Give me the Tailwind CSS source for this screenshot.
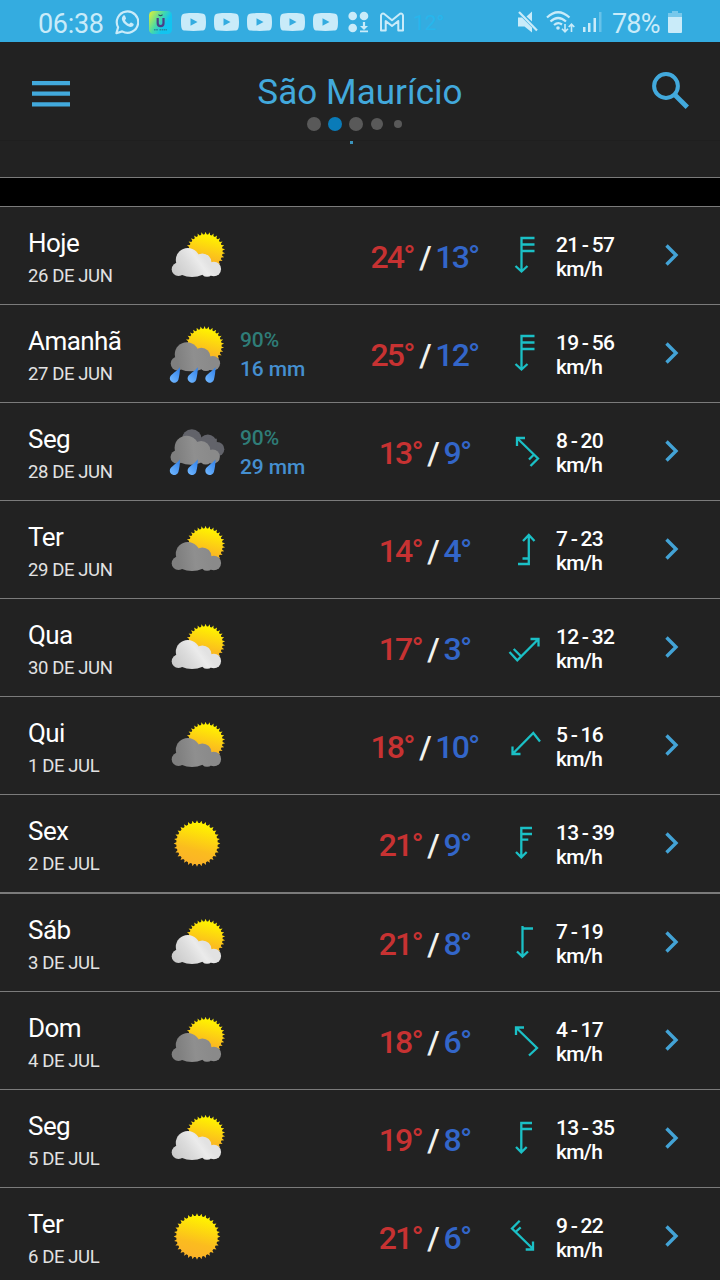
<!DOCTYPE html>
<html lang="pt-BR">
  <head>
    <meta charset="UTF-8" />
    <meta name="viewport" content="width=device-width, initial-scale=1.0" />
    <title>São Maurício</title>
    <script src="https://cdn.jsdelivr.net/npm/@tailwindcss/browser@4"></script>
  </head>
  <body class="bg-black font-['Roboto',sans-serif] text-white">
    <!-- Shared icons -->
    <svg class="absolute size-0" aria-hidden="true">
      <defs>
        <linearGradient id="sunFill" x1="0.65" y1="0" x2="0.4" y2="1">
          <stop offset="0.1" stop-color="#fff200" />
          <stop offset="0.65" stop-color="#fbbc1f" />
          <stop offset="1" stop-color="#fbb02a" />
        </linearGradient>
        <linearGradient id="lightCloud" gradientUnits="userSpaceOnUse" x1="6" y1="50" x2="34" y2="30">
          <stop offset="0" stop-color="#c9c9c9" />
          <stop offset="0.5" stop-color="#dcdcdc" />
          <stop offset="0.8" stop-color="#ebebeb" />
          <stop offset="1" stop-color="#e2e2e2" />
        </linearGradient>
        <linearGradient id="darkCloud" gradientUnits="userSpaceOnUse" x1="10" y1="42" x2="44" y2="38">
          <stop offset="0" stop-color="#7f7f7f" />
          <stop offset="0.5" stop-color="#8f8f8f" />
          <stop offset="1" stop-color="#8a8a8a" />
        </linearGradient>
        <linearGradient id="dropFill" x1="1" y1="0" x2="0.2" y2="1">
          <stop offset="0" stop-color="#2f7fe8" />
          <stop offset="1" stop-color="#6fb6ff" />
        </linearGradient>
        <linearGradient id="appFill" x1="0" y1="0.1" x2="1" y2="0.7">
          <stop offset="0" stop-color="#d9ee3c" />
          <stop offset="0.45" stop-color="#46d9a8" />
          <stop offset="0.75" stop-color="#12c4f0" />
        </linearGradient>
        <g id="cloudShape">
          <circle cx="10.5" cy="45.3" r="6.8" />
          <circle cx="19.8" cy="36" r="12" />
          <circle cx="34.3" cy="38.6" r="9.2" />
          <circle cx="45.8" cy="45" r="7.3" />
          <circle cx="39" cy="46.5" r="6.3" />
          <ellipse cx="24" cy="46.5" rx="14" ry="6.5" />
        </g>
        <g id="drops" fill="url(#dropFill)">
          <path d="M13.2 41.5C13.2 46 12.6 50 11.6 54A4.4 4.4 0 1 1 3.2 51.3C4.8 48 9.5 46 13.2 41.5Z" />
          <path d="M31 41.5C31 46 30.4 50 29.4 54A4.4 4.4 0 1 1 21 51.3C22.6 48 27.3 46 31 41.5Z" />
          <path d="M48.7 41.5C48.7 46 48.1 50 47.1 54A4.4 4.4 0 1 1 38.7 51.3C40.3 48 45 46 48.7 41.5Z" />
        </g>
        <symbol id="youtube" viewBox="0 0 25 18">
          <path fill="currentColor" fill-rule="evenodd" d="M4 0.4C9 0 16 0 21 0.4C24 0.6 25 2 25 9S24 17.4 21 17.6C16 18 9 18 4 17.6C1 17.4 0 16 0 9S1 0.6 4 0.4ZM9.5 5.2V12.8L16.5 9Z" />
        </symbol>
      </defs>
    </svg>

    <div class="w-[720px] h-[1280px] overflow-hidden">
      <!-- Status bar -->
      <div class="h-[42px] bg-[#34ace0] text-[#c9ebf9] flex items-center pl-[38px] pt-[2px]">
        <span class="w-[77px] pt-1 text-[27px] leading-none tracking-[-0.3px]">06:38</span>
        <svg class="w-6 h-[26px]" viewBox="0 0 24 26" fill="none" stroke="currentColor" stroke-width="2.2">
          <path d="M1.4 24.2L3.1 18.2A10.7 10.7 0 1 1 7.2 22.4Z" stroke-linejoin="round" />
          <path fill="currentColor" stroke="none" d="M8.2 6.8c.7-.7 1.6-.5 1.9.2l.9 2.2c.2.7-.8 1.6-1 2 .8 1.8 2.4 3.1 4.3 3.8.5-.3 1.2-1.7 1.9-1.4l2.2 1.1c.8.5-.1 2.4-1 2.9-2 1-4.6-.2-6.3-1.5C9 14.5 7.2 12.3 6.9 10.2c-.1-1.3.4-2.6 1.3-3.4Z" />
        </svg>
        <svg class="ml-[10px] size-[23px]" viewBox="0 0 23 23">
          <rect width="23" height="23" rx="4.5" fill="url(#appFill)" />
          <path d="M8.7 7V12.2A2.9 2.9 0 0 0 14.5 12.2V7" fill="none" stroke="#4b3f86" stroke-width="2.2" />
          <path d="M9.5 3.6Q11.5 5.8 13.5 3.6" fill="none" stroke="#33506a" stroke-width="1.2" />
          <path d="M5 18.8H9M10.5 18.8H18" stroke="#2789a0" stroke-width="1.5" stroke-dasharray="1.6 .6" />
        </svg>
        <div class="ml-[9px] flex gap-2">
          <svg class="w-[25px] h-[18px]"><use href="#youtube" /></svg>
          <svg class="w-[25px] h-[18px]"><use href="#youtube" /></svg>
          <svg class="w-[25px] h-[18px]"><use href="#youtube" /></svg>
          <svg class="w-[25px] h-[18px]"><use href="#youtube" /></svg>
          <svg class="w-[25px] h-[18px]"><use href="#youtube" /></svg>
        </div>
        <svg class="ml-[10px] w-[21px] h-[22px]" viewBox="0 0 21 22" fill="currentColor">
          <circle cx="4.7" cy="5" r="4.3" />
          <circle cx="16" cy="5" r="4.3" />
          <circle cx="4.7" cy="17" r="4.3" />
          <path d="M14.9 11H17.1V15H20L16 19L12 15H14.9ZM12 19.5H20V21.3H12Z" />
        </svg>
        <svg class="ml-[11px] w-6 h-5" viewBox="0 0 24 20" fill="none" stroke="currentColor" stroke-width="2" stroke-linejoin="round">
          <path d="M1 18.5V3.5Q1.5 1 4 1.8L12 8.3L20 1.8Q22.5 1 23 3.5V18.5H18.3V9L12 14L5.7 9V18.5Z" />
        </svg>
        <span class="ml-[9px] w-[105px] pt-[2px] text-[21px] leading-none text-[#27b6ec]">12°</span>
        <svg class="w-5 h-[22px]" viewBox="0 0 20 22">
          <path fill="currentColor" d="M0 6.5H4L14 16.5V21.5L6.5 15.5H0ZM8.5 5.5L14 0.5V10.5Z" />
          <path d="M1 1L19 19.5" stroke="currentColor" stroke-width="2.2" />
        </svg>
        <svg class="ml-2 w-[29px] h-6" viewBox="0 0 29 24" fill="none" stroke="currentColor" stroke-width="2.2">
          <path d="M1 7.5Q12 -3 23.5 7.5M4.5 11.5Q12 4.5 20 11.5M8 15Q12 11.7 16 14.5" />
          <circle cx="12" cy="18" r="1.8" fill="currentColor" stroke="none" />
          <path stroke-width="1.6" d="M19 14V22M16 18.8L19 21.8L22 18.8M25.5 22V14M22.7 17L25.5 14.2L28.3 17" />
        </svg>
        <svg class="ml-2 w-[19px] h-5" viewBox="0 0 19 20" fill="currentColor">
          <path d="M0 15H2.5V20H0ZM5 11H7.5V20H5ZM10.5 6H13V20H10.5Z" />
          <path opacity="0.35" d="M16 0H18.5V20H16Z" />
        </svg>
        <span class="ml-[10px] w-[56px] pt-1 text-[27px] leading-none tracking-[-0.8px]">78%</span>
        <svg class="w-[14px] h-[22px]" viewBox="0 0 14 22" fill="currentColor">
          <path opacity="0.45" d="M4 0H10V2H14V7H0V2H4Z" />
          <path d="M0 6H14V21Q14 22 13 22H1Q0 22 0 21Z" />
        </svg>
      </div>

      <!-- Header -->
      <header class="h-[99px] bg-[#222222] border-b border-[#1f1f1f] text-[#42a9dc] flex justify-between pl-8 pr-[30px]">
        <svg class="mt-[39px] w-[38px] h-[26px]" viewBox="0 0 38 26" fill="currentColor">
          <path d="M0 0H38V4.2H0ZM0 10.6H38V14.8H0ZM0 21.3H38V25.5H0Z" />
        </svg>
        <div class="flex flex-col items-center pt-[31px] -ml-[2px]">
          <h1 class="text-[35px] leading-10 tracking-[0.05px] whitespace-nowrap">São Maurício</h1>
          <div class="mt-1 ml-[-11px] h-[14px] flex items-center">
            <span class="size-[14px] rounded-full bg-[#595959]"></span>
            <span class="ml-[7px] size-[14px] rounded-full bg-[#0a7bb8]"></span>
            <span class="ml-[7px] size-[14px] rounded-full bg-[#595959]"></span>
            <span class="ml-2 size-3 rounded-full bg-[#595959]"></span>
            <span class="ml-[11px] size-2 rounded-full bg-[#595959]"></span>
          </div>
        </div>
        <svg class="mt-[30px] w-[38px] h-[38px]" viewBox="0 0 38 38" fill="none" stroke="currentColor">
          <circle cx="14" cy="14" r="11.9" stroke-width="4" />
          <path d="M23 23L35.3 35.3" stroke-width="4.8" />
        </svg>
      </header>

      <!-- End of the block scrolled under the header -->
      <div class="h-[37px] bg-[#222222] border-b border-[#7b7b7b]">
        <div class="ml-[350px] w-[3px] h-[3px] bg-[#3b93bb]"></div>
      </div>
      <div class="h-7 bg-black"></div>

      <main id="forecast"></main>
    </div>

    <script>
      const days = [
        { name: 'Hoje', date: '26 DE JUN', icon: 'light', max: 24, min: 13, wind: '21 - 57', arrow: 'M17.5 42V8H30.5M17.5 14.5H30.5M17.5 21H30.5M11.5 36L17.5 41.5L23.5 36' },
        { name: 'Amanhã', date: '27 DE JUN', icon: 'sunRain', rain: '90%', mm: '16 mm', max: 25, min: 12, wind: '19 - 56', arrow: 'M17.5 42V8H30.5M17.5 14.5H30.5M17.5 21H30.5M11.5 36L17.5 41.5L23.5 36' },
        { name: 'Seg', date: '28 DE JUN', icon: 'rain', rain: '90%', mm: '29 mm', max: 13, min: 9, wind: '8 - 20', arrow: 'M13 12L34 32.5L26.5 40M30 28.5L25 33.5M21 12H13V20' },
        { name: 'Ter', date: '29 DE JUN', icon: 'dark', max: 14, min: 4, wind: '7 - 23', arrow: 'M24.8 11V40H14M25 34.5H18.5M19 17L24.8 11L30.5 17' },
        { name: 'Qua', date: '30 DE JUN', icon: 'light', max: 17, min: 3, wind: '12 - 32', arrow: 'M34.5 17L13.3 38.3L5.5 30M16.7 34L9.7 27M26.5 17H34.5V24.5' },
        { name: 'Qui', date: '1 DE JUL', icon: 'dark', max: 18, min: 10, wind: '5 - 16', arrow: 'M8.5 34L29.3 13L36 21.5M8.5 26.5V34H16.5' },
        { name: 'Sex', date: '2 DE JUL', icon: 'sun', max: 21, min: 9, wind: '13 - 39', arrow: 'M17.3 39.5V10H28M17.3 16H28M17.3 21.7H24.3M12 34L17.3 39.3L22.7 34' },
        { name: 'Sáb', date: '3 DE JUL', icon: 'light', max: 21, min: 8, wind: '7 - 19', arrow: 'M18.5 40V9M18.5 11.5H29M13 34.5L18.5 39.7L24 34.5' },
        { name: 'Dom', date: '4 DE JUL', icon: 'dark', max: 18, min: 6, wind: '4 - 17', arrow: 'M12 12.5L33 33L25 40.5M20 12.5H12V20' },
        { name: 'Seg', date: '5 DE JUL', icon: 'light', max: 19, min: 8, wind: '13 - 35', arrow: 'M17.3 39.5V10H28M17.3 16H28M12 34L17.3 39.3L22.7 34' },
        { name: 'Ter', date: '6 DE JUL', icon: 'sun', max: 21, min: 6, wind: '9 - 22', arrow: 'M29 38L8 17.5L15.7 9.7M11.5 21L16.7 16.3M21.7 38.5H29V30.5' },
      ];

      // round disc with small pointed teeth
      function sun(cx, cy, r, teeth) {
        const pts = [];
        const step = (Math.PI * 2) / teeth;
        for (let i = 0; i < teeth; i++) {
          [[-0.5, 0], [-0.28, 0], [0, 2.6], [0.28, 0]].forEach(([a, d]) => {
            const t = (i + a) * step;
            pts.push(`${(cx + (r + d) * Math.sin(t)).toFixed(2)},${(cy - (r + d) * Math.cos(t)).toFixed(2)}`);
          });
        }
        return `<polygon points="${pts.join(' ')}" fill="url(#sunFill)" />`;
      }

      const sunBehind = sun(37.6, 27.3, 17, 30);
      const darkCloud = '<use href="#cloudShape" fill="url(#darkCloud)" />';
      const backCloud = '<g fill="#62636a"><circle cx="25" cy="27.5" r="10" /><circle cx="41" cy="31.5" r="8.7" /><circle cx="50.3" cy="37.5" r="7.2" /><path d="M25 27H50V44H25Z" /></g>';

      const icons = {
        light: sunBehind + '<use href="#cloudShape" fill="url(#lightCloud)" />',
        dark: sunBehind + darkCloud,
        sun: sun(29, 31.5, 20.7, 32),
        sunRain: `<g transform="translate(-1 -3.7)">${sunBehind}${darkCloud}</g><g transform="translate(-1.2 3.7)"><use href="#drops" /></g>`,
        rain: `<g transform="translate(-1.2 -8.3)">${backCloud}${darkCloud}</g><g transform="translate(-1.2 -2)"><use href="#drops" /></g>`,
      };

      document.getElementById('forecast').innerHTML = days.map((d, i) => `
        <div class="${i === 7 ? 'h-[99px] border-t-2' : 'h-[98px] border-t'} border-[#7b7b7b] bg-[#222222] flex items-start pl-7">
          <div class="w-[140px] pt-[20.5px]">
            <p class="text-[26px] leading-[30px] tracking-[-0.55px]">${d.name}</p>
            <p class="mt-[7.5px] text-[18.5px] leading-[22px] tracking-[-0.4px] text-[#e2e2e2]">${d.date}</p>
          </div>
          <svg class="mt-[17px] w-[60px] h-[62px]" viewBox="0 0 60 62">${icons[d.icon]}</svg>
          <div class="ml-3 w-[105px] pt-[21px] text-[21px] leading-[29px] font-medium tracking-[-0.1px]">
            <p class="text-[#2f7d78]">${d.rain ?? ''}</p>
            <p class="text-[#458fd0]">${d.mm ?? ''}</p>
          </div>
          <div class="w-[159px] pt-[31px] flex justify-center gap-[5.5px] text-[32px] leading-[38px] font-medium tracking-[-1.8px]">
            <span class="text-[#c73232]">${d.max}°</span>
            <span class="text-[#f2f2ee]">/</span>
            <span class="text-[#3366c9]">${d.min}°</span>
          </div>
          <svg class="mt-[23px] w-10 h-12" viewBox="0 0 40 48" fill="none" stroke="#1bc0c6" stroke-width="2.3"><path d="${d.arrow}" /></svg>
          <div class="ml-3 w-[109px] pt-[26px] text-[21px] leading-6 font-medium tracking-[-0.75px] [word-spacing:-1px]">
            <p>${d.wind}</p>
            <p>km/h</p>
          </div>
          <svg class="mt-[37px] w-[14px] h-[22px]" viewBox="0 0 14 22" fill="none" stroke="#43a3d6" stroke-width="3.4"><path d="M1.5 1.5L11 11L1.5 20.5" /></svg>
        </div>`).join('');
    </script>
  </body>
</html>
